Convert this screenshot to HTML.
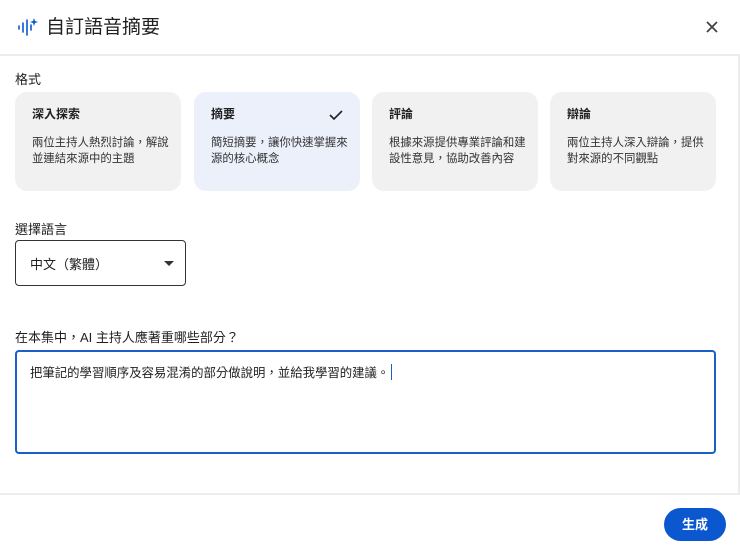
<!DOCTYPE html>
<html><head><meta charset="utf-8"><style>
*{box-sizing:border-box;margin:0;padding:0}
body{width:740px;height:547px;background:#fff;font-family:"Liberation Sans","Noto Sans CJK TC",sans-serif;color:#1f1f1f;position:relative;overflow:hidden}
.abs{position:absolute}
.card{position:absolute;top:92px;width:166px;height:99px;border-radius:12px;background:#f1f1f1;padding:15px 0 0 17px}
.card.sel{background:#ecf0fb}
.card h4{font-size:12px;font-weight:700;line-height:14px;margin-bottom:14px}
.card p{font-size:11.4px;line-height:16px;color:#333;width:140px}
</style></head><body>
<svg class="abs" style="left:17px;top:17px" width="22" height="20" viewBox="0 0 22 20">
<g stroke="#0b57d0" stroke-width="1.6" stroke-linecap="round"><line x1="2" y1="9" x2="2" y2="12"/><line x1="6" y1="6" x2="6" y2="15"/><line x1="10" y1="3" x2="10" y2="18"/><line x1="14" y1="8" x2="14" y2="13"/></g>
<path d="M17 1 L18 4 L21 5 L18 6 L17 9 L16 6 L13 5 L16 4Z" fill="#0b57d0"/></svg>
<div class="abs" style="left:46px;top:15px;font-size:19px;line-height:26px">自訂語音摘要</div>
<svg class="abs" style="left:705px;top:20px" width="14" height="14" viewBox="0 0 14 14"><path d="M2 2L12 12M12 2L2 12" stroke="#444" stroke-width="1.8"/></svg>
<div class="abs" style="left:0;top:54px;width:740px;height:2px;background:#ececec"></div>
<div class="abs" style="left:15px;top:69px;font-size:13px">格式</div>
<div class="card" style="left:15px"><h4>深入探索</h4><p>兩位主持人熱烈討論，解說並連結來源中的主題</p></div>
<div class="card sel" style="left:194px"><h4>摘要</h4><p>簡短摘要，讓你快速掌握來源的核心概念</p>
<svg class="abs" style="left:135px;top:17px" width="14" height="12" viewBox="0 0 14 12"><path d="M1 6L5 10L13 2" stroke="#222" stroke-width="1.6" fill="none"/></svg></div>
<div class="card" style="left:372px"><h4>評論</h4><p>根據來源提供專業評論和建設性意見，協助改善內容</p></div>
<div class="card" style="left:550px"><h4>辯論</h4><p>兩位主持人深入辯論，提供對來源的不同觀點</p></div>
<div class="abs" style="left:15px;top:219px;font-size:13px">選擇語言</div>
<div class="abs" style="left:15px;top:240px;width:171px;height:46px;border:1px solid #333;border-radius:4px;font-size:13px;padding:13px 0 0 14px">中文（繁體）
<svg class="abs" style="left:148px;top:20px" width="10" height="5" viewBox="0 0 10 5"><path d="M0 0L10 0L5 5Z" fill="#333"/></svg></div>
<div class="abs" style="left:15px;top:327px;font-size:13px">在本集中，AI 主持人應著重哪些部分？</div>
<div class="abs" style="left:15px;top:350px;width:701px;height:104px;border:2px solid #1a5fc8;border-radius:4px;font-size:12.4px;padding:11px 0 0 13px">把筆記的學習順序及容易混淆的部分做說明，並給我學習的建議。<span style="display:inline-block;width:1px;height:16px;background:#1a5fc8;vertical-align:-3px;margin-left:2px"></span></div>
<div class="abs" style="left:0;top:493px;width:740px;height:2px;background:#ececec"></div>
<div class="abs" style="left:664px;top:508px;width:62px;height:33px;border-radius:17px;background:#0b57d0;color:#fff;font-size:13px;font-weight:700;text-align:center;line-height:33px">生成</div>
<div class="abs" style="left:738px;top:56px;width:2px;height:437px;background:#ececec"></div>
</body></html>
